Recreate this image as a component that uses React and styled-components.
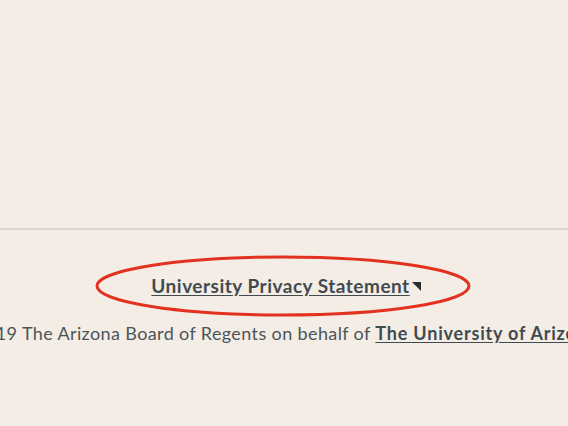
import { createGlobalStyle, styled } from 'styled-components'

const GlobalStyle = createGlobalStyle`
  html, body {
    margin: 0;
    padding: 0;
    background: #f4ede6;
    overflow: hidden;
  }
  body {
    font-family: Lato, "Noto Sans", sans-serif;
    color: #4b5558;
  }
`

const Page = styled.div`
  width: 568px;
  height: 426px;
  display: flex;
  flex-direction: column;
  position: relative;
  overflow: hidden;
`

const Upper = styled.div`
  height: 228px;
  flex-shrink: 0;
`

const Footer = styled.footer`
  border-top: 2px solid #ddd5cf;
  padding-top: 42px;
  display: flex;
  flex-direction: column;
  align-items: center;
  gap: 21px;
`

const LinkRow = styled.div`
  display: flex;
  align-items: flex-start;
  font-size: 19px;
  line-height: 27px;
  padding-left: 4px;
`

const Link = styled.a`
  color: #414b4f;
  font-weight: 700;
  letter-spacing: 0.5px;
  text-decoration: underline;
  text-underline-offset: 2px;
`

const ExternalMark = styled.span`
  width: 0;
  height: 0;
  margin-left: 2px;
  margin-top: 10px;
  border-top: 9px solid #2a2f31;
  border-left: 9px solid transparent;
`

const Copyright = styled.p`
  margin: 0;
  font-size: 18px;
  line-height: 27px;
  letter-spacing: 0.38px;
  white-space: nowrap;
  width: 568px;
  box-sizing: border-box;
  padding-right: 12px;
  display: flex;
  justify-content: center;

  a {
    color: #414b4f;
    font-weight: 700;
    letter-spacing: 0.8px;
    text-decoration: underline;
    text-underline-offset: 2px;
  }
`

const Annotation = styled.svg`
  position: absolute;
  left: 0;
  top: 0;
  pointer-events: none;
`

export default function App() {
  return (
    <>
      <GlobalStyle />
      <Page>
        <Upper />
        <Footer>
          <LinkRow>
            <Link href="#">University Privacy Statement</Link>
            <ExternalMark />
          </LinkRow>
          <Copyright>
            <span>
              © 2019 The Arizona Board of Regents on behalf of{' '}
              <a href="#">The University of Arizona</a>.
            </span>
          </Copyright>
        </Footer>
        <Annotation width="568" height="426">
          <ellipse cx="283" cy="286" rx="186" ry="29" fill="none" stroke="#e2321f" strokeWidth="3" />
        </Annotation>
      </Page>
    </>
  )
}
